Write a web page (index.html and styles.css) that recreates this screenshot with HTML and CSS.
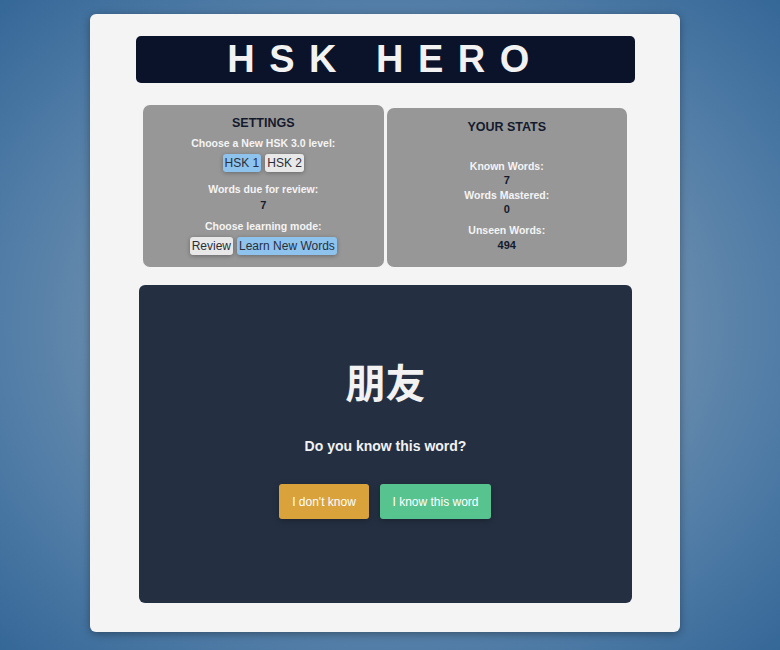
FILE: index.html
```html
<!doctype html>
<html>
 <head>
  <meta charset="UTF-8">
  <title>HSK Hero</title>
  <link rel="stylesheet" href="styles.css">
 </head>
 <body>
  <!--S. app-->
  <div id="app">
    <h1 class="logo">HSK HERO</h1>

    <div class="panels">
      <div class="panel settings">
        <h3>SETTINGS</h3>
        <p class="lbl l_level">Choose a New HSK 3.0 level:</p>
        <div class="btns">
          <button class="opt on">HSK 1</button>
          <button class="opt">HSK 2</button>
        </div>
        <p class="lbl l_due">Words due for review:</p>
        <p class="val v_due">7</p>
        <p class="lbl l_mode">Choose learning mode:</p>
        <div class="btns">
          <button class="opt">Review</button>
          <button class="opt on">Learn New Words</button>
        </div>
      </div>

      <div class="panel stats">
        <h3>YOUR STATS</h3>
        <p class="lbl s_known">Known Words:</p>
        <p class="val">7</p>
        <p class="lbl s_mast">Words Mastered:</p>
        <p class="val">0</p>
        <p class="lbl s_unseen">Unseen Words:</p>
        <p class="val v_unseen">494</p>
      </div>
    </div>

    <div class="card">
      <div class="word">朋友</div>
      <p class="ask">Do you know this word?</p>
      <div class="answer">
        <button class="a_no">I don't know</button>
        <button class="a_yes">I know this word</button>
      </div>
    </div>
  </div>
  <!--E. app-->
 </body>
</html>
```

FILE: styles.css
```css
*{padding:0;margin:0;box-sizing:border-box;}
html,body{height:100%;}
body{font-family:"Liberation Sans",Arial,sans-serif;background:radial-gradient(ellipse at 50% 50%,#8ea8be 0%,#7896b2 35%,#4d7aa5 75%,#356797 100%);overflow:hidden;}

/*S. app*/
#app{width:590px;height:618px;margin:14px 0 0 90px;background:#f4f4f4;border-radius:6px;box-shadow:0 2px 8px rgba(0,0,0,.35);padding:22px 45px 0 46px;}
#app .logo{height:47px;background:#0b132b;border-radius:5px;color:#f2f2f2;font-size:38px;font-weight:700;letter-spacing:14.5px;line-height:47px;text-align:center;}

.panels{display:flex;align-items:flex-end;gap:3px;margin:0 8px 0 7px;}
.panel{flex:1;background:#979797;border-radius:7px;text-align:center;}
.panel h3{font-size:12.5px;line-height:16px;color:#141a2e;font-weight:700;}
.panel .lbl{font-size:10.5px;line-height:12px;color:#f4f4f4;font-weight:700;}
.panel .val{font-size:11px;line-height:13px;color:#141a2e;font-weight:700;}

.settings{height:162px;margin-top:22px;padding-top:10px;}
.settings .l_level{margin-top:6px;}
.settings .btns{display:flex;justify-content:center;gap:4px;margin-top:5px;}
.settings .opt{font-family:inherit;font-size:12px;line-height:14px;padding:2px 2px;border:none;border-radius:3px;background:#e8e8e8;color:#2a2f3a;box-shadow:0 1px 4px rgba(0,0,0,.3);}
.settings .opt.on{background:#8ec3ee;}
.settings .l_due{margin-top:11px;}
.settings .v_due{margin-top:4px;}
.settings .l_mode{margin-top:8px;}

.stats{height:159px;padding-top:11px;}
.stats .s_known{margin-top:25px;}
.stats .val{margin-top:2px;}
.stats .s_mast{margin-top:2px;}
.stats .s_unseen{margin-top:8px;}
.stats .v_unseen{margin-top:3px;}

.card{height:318px;margin:18px 3px 0 3px;background:#243042;border-radius:6px;text-align:center;color:#f2f2f2;padding-top:71px;}
.card .word{font-family:"Noto Sans CJK SC",sans-serif;font-size:40px;line-height:50px;font-weight:700;}
.card .ask{font-size:14px;line-height:16px;font-weight:700;margin-top:32px;}
.card .answer{display:flex;justify-content:center;gap:11px;margin-top:30px;padding-right:1px;}
.card .answer button{height:35px;border:none;border-radius:3px;font-family:inherit;font-size:12px;color:#fff;box-shadow:0 2px 6px rgba(0,0,0,.3);}
.card .a_no{width:90px;background:#d9a23b;}
.card .a_yes{width:111px;background:#57c48f;}
/*E. app*/
```
